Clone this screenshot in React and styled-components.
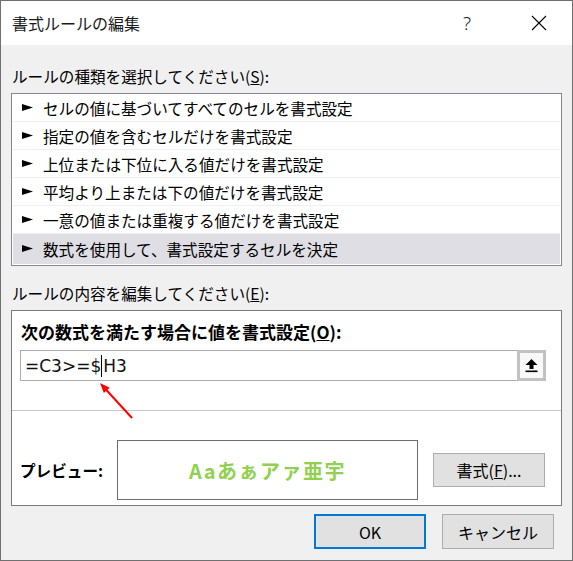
import React from 'react';
import styled, { createGlobalStyle } from 'styled-components';

const GlobalStyle = createGlobalStyle`
  body {
    margin: 0;
    background: #ffffff;
  }
  * {
    box-sizing: border-box;
  }
`;

const Window = styled.div`
  position: relative;
  width: 573px;
  height: 561px;
  border: 1px solid #707070;
  display: flex;
  flex-direction: column;
  font-family: "Noto Sans CJK JP", "Noto Sans", sans-serif;
  color: #000;
`;

const TitleBar = styled.div`
  height: 44px;
  flex-shrink: 0;
  background: #ffffff;
  display: flex;
  align-items: center;
  padding-left: 11px;
`;

const Title = styled.div`
  font-size: 16px;
  color: #1a1a1a;
`;

const TitleButton = styled.div`
  width: 46px;
  height: 44px;
  display: flex;
  align-items: center;
  justify-content: center;
  font-family: "Noto Sans", sans-serif;
  font-size: 19px;
  font-weight: 300;
  color: #222;
  margin-left: ${(p) => (p.$first ? 'auto' : '0')};
  margin-right: ${(p) => p.$gap}px;
`;

const Body = styled.div`
  flex: 1;
  background: #f0f0f0;
  padding: 21px 10px 0 10px;
  display: flex;
  flex-direction: column;
`;

const SectionLabel = styled.div`
  font-size: 15.6px;
  line-height: 20px;
  padding-left: 1px;
  margin-top: ${(p) => p.$top || 0}px;
  white-space: nowrap;
`;

const RuleList = styled.div`
  margin-top: 7px;
  background: #ffffff;
  border: 1px solid #828790;
  padding: 0 1px 1px 1px;
`;

const RuleRow = styled.div`
  height: 28px;
  display: flex;
  align-items: center;
  gap: 10px;
  padding-left: 9px;
  font-size: 15.6px;
  white-space: nowrap;
  background: ${(p) => (p.$selected ? '#dedee4' : '#ffffff')};
  border-bottom: 1px solid ${(p) => (p.$selected ? '#dedee4' : '#efefef')};
  &:last-child {
    height: 30px;
  }
`;

const EditPanel = styled.div`
  position: relative;
  margin-top: 7px;
  height: 196px;
  background: #ffffff;
  border: 1px solid #7a7a7a;
  padding-top: 10px;
  display: flex;
  flex-direction: column;
`;

const BoldLabel = styled.div`
  font-size: ${(p) => p.$size || 15.6}px;
  font-weight: 700;
  line-height: 22px;
  white-space: nowrap;
  padding-left: ${(p) => p.$pad || 0}px;
  width: ${(p) => (p.$width ? `${p.$width}px` : 'auto')};
  flex-shrink: 0;
`;

const InputRow = styled.div`
  margin: 7px 15px 0 8px;
  height: 31px;
  display: flex;
`;

const FormulaField = styled.div`
  flex: 1;
  border: 1px solid #acacac;
  border-right: none;
  display: flex;
  align-items: center;
  padding-left: 4px;
  font-family: "DejaVu Sans", "Noto Sans", sans-serif;
  font-size: 17px;
  color: #111;
`;

const Caret = styled.span`
  display: inline-block;
  width: 1px;
  height: 22px;
  background: #000;
  margin: 0 1px 0 0;
`;

const RefButton = styled.div`
  width: 29px;
  border: 3px solid #c2c2c2;
  background: #f8f8f8;
  display: flex;
  align-items: center;
  justify-content: center;
`;

const Divider = styled.div`
  margin-top: 29px;
  height: 1px;
  background: #c8c8c8;
`;

const PreviewRow = styled.div`
  margin-top: 29px;
  display: flex;
  align-items: center;
  padding-left: 8px;
`;

const PreviewBox = styled.div`
  width: 301px;
  height: 60px;
  border: 1px solid #6d6d6d;
  display: flex;
  align-items: center;
  justify-content: center;
  font-size: 20px;
  font-weight: 700;
  color: #92d050;
  letter-spacing: 1.5px;
`;

const Button = styled.div`
  width: 112px;
  height: ${(p) => p.$height || 35}px;
  margin-left: ${(p) => p.$left || 0}px;
  background: #e1e1e1;
  border: ${(p) => (p.$default ? '2px solid #0078d7' : '1px solid #adadad')};
  display: flex;
  align-items: center;
  justify-content: center;
  font-size: 16px;
  white-space: nowrap;
`;

const ButtonBar = styled.div`
  margin-top: 8px;
  display: flex;
  justify-content: flex-end;
  gap: 16px;
  padding-right: 8px;
`;

const Annotation = styled.svg`
  position: absolute;
  left: 84px;
  top: 68px;
  overflow: visible;
`;

const rules = [
  'セルの値に基づいてすべてのセルを書式設定',
  '指定の値を含むセルだけを書式設定',
  '上位または下位に入る値だけを書式設定',
  '平均より上または下の値だけを書式設定',
  '一意の値または重複する値だけを書式設定',
  '数式を使用して、書式設定するセルを決定',
];

const Pointer = () => (
  <svg width="11" height="7" viewBox="0 0 11 7">
    <polygon points="0,0 11,3.5 0,7" fill="#000" />
  </svg>
);

const App = () => {
  return (
    <>
      <GlobalStyle />
      <Window>
        <TitleBar>
          <Title>書式ルールの編集</Title>
          <TitleButton $first $gap={26}>?</TitleButton>
          <TitleButton $gap={10}>
            <svg width="16" height="16" viewBox="0 0 16 16">
              <path d="M1 1 L15 15 M15 1 L1 15" stroke="#000" strokeWidth="1.1" />
            </svg>
          </TitleButton>
        </TitleBar>
        <Body>
          <SectionLabel>
            ルールの種類を選択してください(<u>S</u>):
          </SectionLabel>
          <RuleList>
            {rules.map((r, i) => (
              <RuleRow key={r} $selected={i === rules.length - 1}>
                <Pointer />
                <span>{r}</span>
              </RuleRow>
            ))}
          </RuleList>
          <SectionLabel $top={17}>
            ルールの内容を編集してください(<u>E</u>):
          </SectionLabel>
          <EditPanel>
            <BoldLabel $pad={9} $size={17}>
              次の数式を満たす場合に値を書式設定(<u>O</u>):
            </BoldLabel>
            <InputRow>
              <FormulaField>
                =C3&gt;=$<Caret />H3
              </FormulaField>
              <RefButton>
                <svg width="13" height="14" viewBox="0 0 13 14">
                  <polygon points="6.5,0 0.5,6 4.5,6 4.5,10 8.5,10 8.5,6 12.5,6" fill="#000" />
                  <rect x="0.5" y="11.5" width="12" height="1.6" fill="#000" />
                </svg>
              </RefButton>
            </InputRow>
            <Divider />
            <PreviewRow>
              <BoldLabel $width={97}>プレビュー:</BoldLabel>
              <PreviewBox>Aaあぁアァ亜宇</PreviewBox>
              <Button $left={15} $height={34}>
                書式(<u>F</u>)...
              </Button>
            </PreviewRow>
            <Annotation width="40" height="42" viewBox="0 0 40 42">
              <line x1="36" y1="39" x2="9" y2="9.5" stroke="#ff0000" strokeWidth="2" />
              <polygon points="4,4 13.7,8.7 7.8,14.1" fill="#ff0000" />
            </Annotation>
          </EditPanel>
          <ButtonBar>
            <Button $default>OK</Button>
            <Button>キャンセル</Button>
          </ButtonBar>
        </Body>
      </Window>
    </>
  );
};

export default App;
